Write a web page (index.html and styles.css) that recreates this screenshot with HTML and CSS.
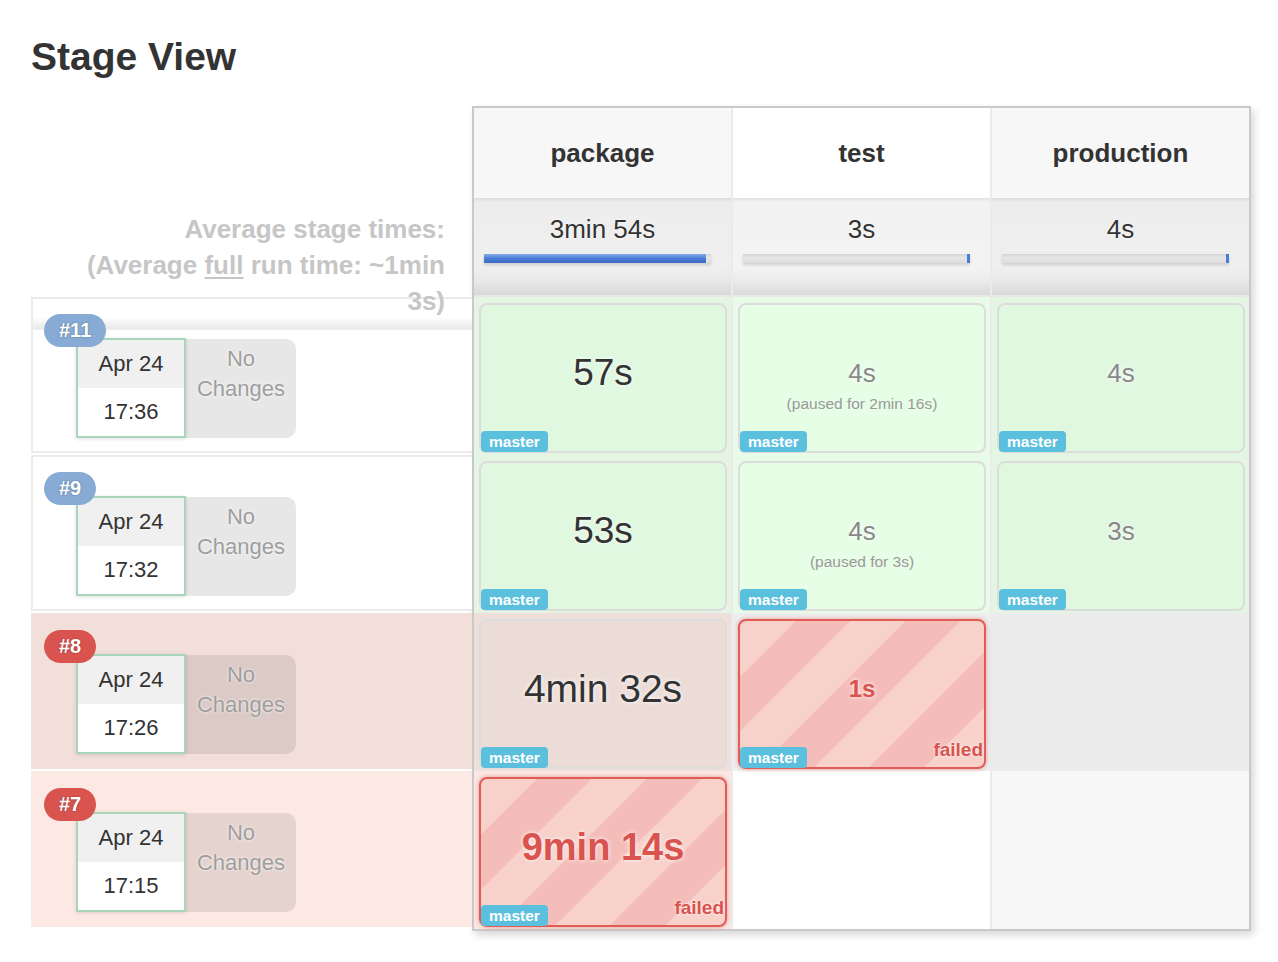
FILE: index.html
```html
<!DOCTYPE html>
<html lang="en">
<head>
<meta charset="utf-8">
<title>Stage View</title>
<link rel="stylesheet" href="styles.css">
</head>
<body>
<div class="page">
  <h2 class="title">Stage View</h2>
  <div class="stage-view">
    <div class="runs">
      <div class="avg-label">Average stage times:<br>(Average <u>full</u> run time: ~1min 3s)</div>

      <div class="run run-first">
        <span class="badge">#11</span>
        <div class="date"><div class="date-day">Apr 24</div><div class="date-time">17:36</div></div>
        <div class="changes">No<br>Changes</div>
      </div>
      <div class="run">
        <span class="badge">#9</span>
        <div class="date"><div class="date-day">Apr 24</div><div class="date-time">17:32</div></div>
        <div class="changes">No<br>Changes</div>
      </div>
      <div class="run run-unstable">
        <span class="badge badge-red">#8</span>
        <div class="date"><div class="date-day">Apr 24</div><div class="date-time">17:26</div></div>
        <div class="changes">No<br>Changes</div>
      </div>
      <div class="run run-failed">
        <span class="badge badge-red">#7</span>
        <div class="date"><div class="date-day">Apr 24</div><div class="date-time">17:15</div></div>
        <div class="changes">No<br>Changes</div>
      </div>
    </div>

    <div class="stages">
      <div class="head">package</div>
      <div class="head head-hl">test</div>
      <div class="head">production</div>

      <div class="avg">3min 54s<div class="bar"><div class="bar-fill" style="width:97.8%"></div></div></div>
      <div class="avg avg-hl">3s<div class="bar"><div class="bar-tip"></div></div></div>
      <div class="avg">4s<div class="bar"><div class="bar-tip"></div></div></div>

      <div class="cell cell-ok"><div class="card"><div class="dur">57s</div><span class="branch">master</span></div></div>
      <div class="cell cell-ok-hl"><div class="card card-hl"><div class="dur dur-minor">4s</div><div class="note">(paused for 2min 16s)</div><span class="branch">master</span></div></div>
      <div class="cell cell-ok"><div class="card"><div class="dur dur-minor">4s</div><span class="branch">master</span></div></div>

      <div class="cell cell-ok"><div class="card"><div class="dur">53s</div><span class="branch">master</span></div></div>
      <div class="cell cell-ok-hl"><div class="card card-hl"><div class="dur dur-minor">4s</div><div class="note">(paused for 3s)</div><span class="branch">master</span></div></div>
      <div class="cell cell-ok"><div class="card"><div class="dur dur-minor">3s</div><span class="branch">master</span></div></div>

      <div class="cell cell-pink"><div class="card card-pink"><div class="dur dur-long">4min 32s</div><span class="branch">master</span></div></div>
      <div class="cell cell-grey-hl"><div class="card card-failed"><div class="dur dur-fail dur-small">1s</div><span class="branch">master</span><span class="failed-tag">failed</span></div></div>
      <div class="cell cell-grey"></div>

      <div class="cell cell-pink2"><div class="card card-failed"><div class="dur dur-fail dur-long">9min 14s</div><span class="branch">master</span><span class="failed-tag">failed</span></div></div>
      <div class="cell cell-white"></div>
      <div class="cell cell-light"></div>
    </div>
  </div>
</div>
</body>
</html>
```

FILE: styles.css
```css
body {
  margin: 0;
  background: #fff;
  color: #333;
  font-family: "Liberation Sans", Arial, Helvetica, sans-serif;
}

.page {
  padding: 35px 0 30px 31px;
}

.title {
  margin: 0;
  font-size: 39px;
  line-height: 44px;
  font-weight: bold;
  color: #333;
}

.stage-view {
  display: flex;
  align-items: flex-start;
  margin-top: 27px;
}

/* ---------- left column: runs ---------- */
.runs {
  flex: none;
  width: 441px;
  padding-top: 92px;
}

.avg-label {
  position: relative;
  z-index: 2;
  height: 99px;
  box-sizing: border-box;
  padding: 13px 27px 0 34px;
  text-align: right;
  font-size: 26px;
  line-height: 36px;
  font-weight: bold;
  color: #c6c6c6;
}

.avg-label u {
  text-decoration: underline;
  text-underline-offset: 3px;
}

.run {
  position: relative;
  display: flex;
  align-items: flex-start;
  height: 156px;
  box-sizing: border-box;
  margin-bottom: 2px;
  padding: 39px 0 0 43px;
  border: 2px solid #ebebeb;
  border-right: none;
  background: #fff;
}

.run-first {
  background: linear-gradient(to bottom, #fff 0, #fff 18px, #e9e9e9 30px, #dcdcdc 30px, #fff 31px, #fff 100%);
}

.run-unstable {
  background: #f2dfda;
  border-color: #f2dfda;
}

.run-failed {
  background: #fde9e4;
  border-color: #fde9e4;
}

.badge {
  position: absolute;
  z-index: 1;
  top: 15px;
  left: 11px;
  height: 33px;
  line-height: 33px;
  padding: 0 15px;
  border-radius: 17px;
  background: #87abd4;
  color: #fff;
  font-size: 20px;
  font-weight: bold;
  text-shadow: 0 0 2px rgba(0, 0, 0, 0.35);
}

.badge-red {
  background: #d9534f;
}

.date {
  flex: none;
  width: 110px;
  height: 100px;
  box-sizing: border-box;
  border: 2px solid #a9d5bb;
  background: #fff;
  box-shadow: 0 1px 4px rgba(0, 0, 0, 0.12);
  text-align: center;
  font-size: 22px;
  color: #333;
}

.date-day {
  height: 48px;
  line-height: 47px;
  background: #f0f0f0;
}

.date-time {
  height: 48px;
  line-height: 47px;
}

.changes {
  flex: none;
  width: 110px;
  height: 99px;
  box-sizing: border-box;
  margin-top: 1px;
  padding-top: 5px;
  border-radius: 0 10px 10px 0;
  background: rgba(0, 0, 0, 0.095);
  color: #9e9e9e;
  font-size: 22px;
  line-height: 30px;
  text-align: center;
  text-shadow: 0 0 3px #fff;
}

/* ---------- right: stages table ---------- */
.stages {
  flex: none;
  display: grid;
  grid-template-columns: repeat(3, 257px);
  column-gap: 2px;
  border: 2px solid #c9c9c9;
  background: #ebebeb;
  box-shadow: 3px 4px 8px rgba(0, 0, 0, 0.16);
}

.head {
  height: 90px;
  display: flex;
  align-items: center;
  justify-content: center;
  background: #f7f7f7;
  font-size: 26px;
  font-weight: bold;
  color: #333;
}

.head-hl {
  background: #fff;
}

.avg {
  height: 99px;
  box-sizing: border-box;
  padding-top: 13px;
  text-align: center;
  font-size: 26px;
  line-height: 36px;
  color: #333;
  text-shadow: 0 0 3px #fff;
  background: linear-gradient(to bottom, #dcdcdc 0, #ededed 4px, #efefef 70%, #e9e9e9 82px, #d8d8d8 97px, #e8e8e8 97px);
}

.avg-hl {
  background: linear-gradient(to bottom, #e0e0e0 0, #f2f2f2 4px, #f3f3f3 70%, #ececec 82px, #dadada 97px, #e8e8e8 97px);
}

.bar {
  position: relative;
  height: 9px;
  margin: 7px 20px 0 10px;
  background: linear-gradient(to bottom, #d4d4d4, #e6e6e6 40%, #dedede);
  box-shadow: 0 2px 3px rgba(0, 0, 0, 0.15);
}

.bar-fill {
  height: 100%;
  background: linear-gradient(to bottom, #86abe6, #4b7dd6 50%, #3c6bc6);
}

.bar-tip {
  position: absolute;
  right: 0;
  top: 0;
  width: 3px;
  height: 100%;
  background: #4b7dd6;
}

.cell {
  height: 158px;
  box-sizing: border-box;
  padding: 6px 4px 2px 5px;
}

.cell-ok { background: #e4f5e4; }
.cell-ok-hl { background: #e8fae8; }
.cell-pink { background: #efdfdb; }
.cell-grey-hl { background: #eeeeee; }
.cell-grey { background: #ececec; }
.cell-pink2 { background: #fbe7e3; }
.cell-white { background: #fff; }
.cell-light { background: #f7f7f7; }

.card {
  position: relative;
  height: 150px;
  box-sizing: border-box;
  display: flex;
  flex-direction: column;
  align-items: center;
  padding-top: 46px;
  border: 2px solid #dcdcdc;
  border-radius: 8px;
  background: #e0f7e0;
}

.card-hl {
  background: #e6fde6;
}

.card-pink {
  background: #ecdcd7;
}

.card-failed {
  border-color: #e05c57;
  background: repeating-linear-gradient(135deg, #f7d1ca 0, #f7d1ca 39px, #f5bdb9 39px, #f5bdb9 78px);
  box-shadow: 0 0 4px rgba(217, 83, 79, 0.55);
}

.dur {
  font-size: 37px;
  line-height: 48px;
  margin-top: -2px;
  color: #333;
  white-space: nowrap;
  text-shadow: 0 0 4px #fff;
}

.dur-long {
  font-size: 39px;
}

.dur-minor {
  font-size: 26px;
  line-height: 44px;
  margin-top: 0;
  color: #888;
}

.dur-fail {
  font-weight: bold;
  color: #d9534f;
}

.dur-fail.dur-long {
  font-size: 38px;
}

.dur-small {
  font-size: 24px;
  line-height: 44px;
  margin-top: 0;
}

.note {
  font-size: 15.5px;
  line-height: 18px;
  color: #9a9a9a;
}

.branch {
  position: absolute;
  left: 0;
  bottom: -1px;
  height: 21px;
  line-height: 21px;
  padding: 0 8px;
  border-radius: 4px;
  background: #5bc0de;
  color: #fff;
  font-size: 15.5px;
  font-weight: bold;
}

.failed-tag {
  position: absolute;
  right: 1px;
  bottom: 6px;
  font-size: 19px;
  line-height: 22px;
  font-weight: bold;
  color: #d9534f;
  text-shadow: 0 0 3px #fff;
}
```
